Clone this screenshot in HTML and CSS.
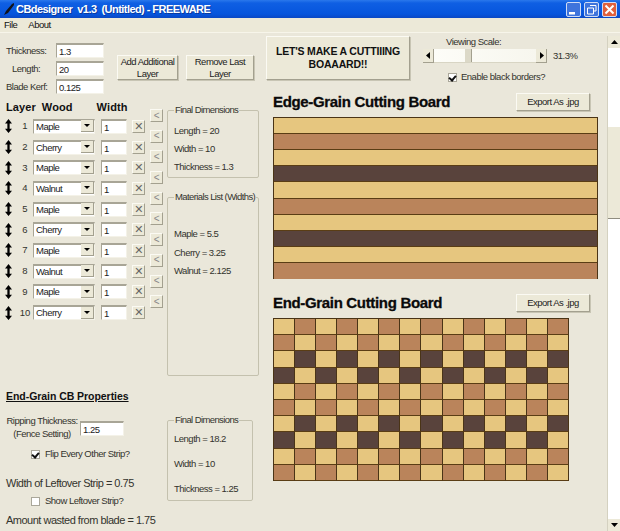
FILE: index.html
```html
<!DOCTYPE html>
<html lang="en">
<head>
<meta charset="utf-8">
<title>CBdesigner</title>
<link rel="stylesheet" href="styles.css">
</head>
<body>
<div class="window">
  <header class="titlebar">
    <svg class="app-icon" width="12" height="14" viewBox="0 0 12 14"><path d="M1 13 L3 9 L9 2 L11 1 L11 3 L5 11 Z" fill="#10131c"/></svg>
    <span class="title">CBdesigner  v1.3  (Untitled) - FREEWARE</span>
    <div class="controls">
      <span class="ctl"><svg width="15" height="15" viewBox="0 0 15 15"><rect x="3" y="10" width="6" height="2.5" fill="#fff"/></svg></span>
      <span class="ctl"><svg width="15" height="15" viewBox="0 0 15 15"><path d="M6 3.5h6v5.5h-2M3.5 6h6v6h-6z" fill="none" stroke="#fff"/></svg></span>
      <span class="ctl close"><svg width="15" height="15" viewBox="0 0 15 15"><path d="M3.5 3.5l8 8M11.5 3.5l-8 8" stroke="#fff" stroke-width="2"/></svg></span>
    </div>
  </header>
  <nav class="menubar"><span>File</span><span>About</span></nav>
  <div class="body">
    <main class="pane">
      <section class="left">
        <div class="params">
          <div class="fields">
            <label class="field"><span class="lbl l-thick">Thickness:</span><span class="input w48">1.3</span></label>
            <label class="field"><span class="lbl l-len">Length:</span><span class="input w48">20</span></label>
            <label class="field"><span class="lbl l-kerf">Blade Kerf:</span><span class="input w48">0.125</span></label>
          </div>
          <button class="btn add">Add Additional<br>Layer</button>
          <button class="btn remove">Remove Last<br>Layer</button>
        </div>
        <div class="layers">
          <div class="table">
            <div class="heads"><b class="h-layer">Layer</b><b class="h-wood">Wood</b><b class="h-width">Width</b></div>
            <div class="row"><svg class="mv" viewBox="0 0 8 16"><use href="#updown"/></svg><span class="num">1</span><span class="select"><span>Maple</span><i class="drop"></i></span><span class="input w26">1</span><button class="x">✕</button></div>
            <div class="row"><svg class="mv" viewBox="0 0 8 16"><use href="#updown"/></svg><span class="num">2</span><span class="select"><span>Cherry</span><i class="drop"></i></span><span class="input w26">1</span><button class="x">✕</button></div>
            <div class="row"><svg class="mv" viewBox="0 0 8 16"><use href="#updown"/></svg><span class="num">3</span><span class="select"><span>Maple</span><i class="drop"></i></span><span class="input w26">1</span><button class="x">✕</button></div>
            <div class="row"><svg class="mv" viewBox="0 0 8 16"><use href="#updown"/></svg><span class="num">4</span><span class="select"><span>Walnut</span><i class="drop"></i></span><span class="input w26">1</span><button class="x">✕</button></div>
            <div class="row"><svg class="mv" viewBox="0 0 8 16"><use href="#updown"/></svg><span class="num">5</span><span class="select"><span>Maple</span><i class="drop"></i></span><span class="input w26">1</span><button class="x">✕</button></div>
            <div class="row"><svg class="mv" viewBox="0 0 8 16"><use href="#updown"/></svg><span class="num">6</span><span class="select"><span>Cherry</span><i class="drop"></i></span><span class="input w26">1</span><button class="x">✕</button></div>
            <div class="row"><svg class="mv" viewBox="0 0 8 16"><use href="#updown"/></svg><span class="num">7</span><span class="select"><span>Maple</span><i class="drop"></i></span><span class="input w26">1</span><button class="x">✕</button></div>
            <div class="row"><svg class="mv" viewBox="0 0 8 16"><use href="#updown"/></svg><span class="num">8</span><span class="select"><span>Walnut</span><i class="drop"></i></span><span class="input w26">1</span><button class="x">✕</button></div>
            <div class="row"><svg class="mv" viewBox="0 0 8 16"><use href="#updown"/></svg><span class="num">9</span><span class="select"><span>Maple</span><i class="drop"></i></span><span class="input w26">1</span><button class="x">✕</button></div>
            <div class="row"><svg class="mv" viewBox="0 0 8 16"><use href="#updown"/></svg><span class="num">10</span><span class="select"><span>Cherry</span><i class="drop"></i></span><span class="input w26">1</span><button class="x">✕</button></div>
          </div>
          <div class="shifts">
            <button class="lt">&lt;</button><button class="lt">&lt;</button><button class="lt">&lt;</button><button class="lt">&lt;</button><button class="lt">&lt;</button><button class="lt">&lt;</button><button class="lt">&lt;</button><button class="lt">&lt;</button><button class="lt">&lt;</button><button class="lt">&lt;</button>
          </div>
          <div class="groups">
            <fieldset class="group final">
              <legend>Final Dimensions</legend>
              <p>Length = 20</p><p>Width = 10</p><p>Thickness = 1.3</p>
            </fieldset>
            <fieldset class="group materials">
              <legend>Materials List (Widths)</legend>
              <p>Maple = 5.5</p><p>Cherry = 3.25</p><p>Walnut = 2.125</p>
            </fieldset>
          </div>
        </div>
        <div class="endgrain">
          <div class="eg-main">
            <h3>End-Grain CB Properties</h3>
            <div class="rip">
              <div class="rip-label">Ripping Thickness:<br>(Fence Setting)</div>
              <span class="input w44">1.25</span>
            </div>
            <div class="check flip"><span class="box on"></span>Flip Every Other Strip?</div>
            <div class="big leftover">Width of Leftover Strip = 0.75</div>
            <div class="check show"><span class="box"></span>Show Leftover Strip?</div>
            <div class="big wasted">Amount wasted from blade = 1.75</div>
          </div>
          <fieldset class="group eg-final">
            <legend>Final Dimensions</legend>
            <p>Length = 18.2</p><p>Width = 10</p><p>Thickness = 1.25</p>
          </fieldset>
        </div>
      </section>
      <section class="right">
        <div class="top">
          <button class="btn make">LET'S MAKE A CUTTIIING<br>BOAAARD!!</button>
          <div class="scale">
            <div class="scale-label">Viewing Scale:</div>
            <div class="slider-row">
              <div class="slider">
                <i class="sl-btn"><svg width="5" height="7" viewBox="0 0 5 7"><path d="M4 0v7L0 3.5z"/></svg></i>
                <i class="sl-track"><i class="sl-thumb"></i></i>
                <i class="sl-btn"><svg width="5" height="7" viewBox="0 0 5 7"><path d="M1 0v7l4-3.5z"/></svg></i>
              </div>
              <span class="pct">31.3%</span>
            </div>
            <div class="check borders"><span class="box on"></span>Enable black borders?</div>
          </div>
        </div>
        <div class="board-head edge-head"><h2>Edge-Grain Cutting Board</h2><button class="btn export">Export As .jpg</button></div>
        <div class="edge">
          <i class="m"></i><i class="c"></i><i class="m"></i><i class="w"></i><i class="m"></i><i class="c"></i><i class="m"></i><i class="w"></i><i class="m"></i><i class="c"></i>
        </div>
        <div class="board-head end-head"><h2>End-Grain Cutting Board</h2><button class="btn export">Export As .jpg</button></div>
        <div class="end">
          <i class="m"></i><i class="c"></i><i class="m"></i><i class="c"></i><i class="m"></i><i class="c"></i><i class="m"></i><i class="c"></i><i class="m"></i><i class="c"></i><i class="m"></i><i class="c"></i><i class="m"></i><i class="c"></i>
          <i class="c"></i><i class="m"></i><i class="c"></i><i class="m"></i><i class="c"></i><i class="m"></i><i class="c"></i><i class="m"></i><i class="c"></i><i class="m"></i><i class="c"></i><i class="m"></i><i class="c"></i><i class="m"></i>
          <i class="m"></i><i class="w"></i><i class="m"></i><i class="w"></i><i class="m"></i><i class="w"></i><i class="m"></i><i class="w"></i><i class="m"></i><i class="w"></i><i class="m"></i><i class="w"></i><i class="m"></i><i class="w"></i>
          <i class="w"></i><i class="m"></i><i class="w"></i><i class="m"></i><i class="w"></i><i class="m"></i><i class="w"></i><i class="m"></i><i class="w"></i><i class="m"></i><i class="w"></i><i class="m"></i><i class="w"></i><i class="m"></i>
          <i class="m"></i><i class="c"></i><i class="m"></i><i class="c"></i><i class="m"></i><i class="c"></i><i class="m"></i><i class="c"></i><i class="m"></i><i class="c"></i><i class="m"></i><i class="c"></i><i class="m"></i><i class="c"></i>
          <i class="c"></i><i class="m"></i><i class="c"></i><i class="m"></i><i class="c"></i><i class="m"></i><i class="c"></i><i class="m"></i><i class="c"></i><i class="m"></i><i class="c"></i><i class="m"></i><i class="c"></i><i class="m"></i>
          <i class="m"></i><i class="w"></i><i class="m"></i><i class="w"></i><i class="m"></i><i class="w"></i><i class="m"></i><i class="w"></i><i class="m"></i><i class="w"></i><i class="m"></i><i class="w"></i><i class="m"></i><i class="w"></i>
          <i class="w"></i><i class="m"></i><i class="w"></i><i class="m"></i><i class="w"></i><i class="m"></i><i class="w"></i><i class="m"></i><i class="w"></i><i class="m"></i><i class="w"></i><i class="m"></i><i class="w"></i><i class="m"></i>
          <i class="m"></i><i class="c"></i><i class="m"></i><i class="c"></i><i class="m"></i><i class="c"></i><i class="m"></i><i class="c"></i><i class="m"></i><i class="c"></i><i class="m"></i><i class="c"></i><i class="m"></i><i class="c"></i>
          <i class="c"></i><i class="m"></i><i class="c"></i><i class="m"></i><i class="c"></i><i class="m"></i><i class="c"></i><i class="m"></i><i class="c"></i><i class="m"></i><i class="c"></i><i class="m"></i><i class="c"></i><i class="m"></i>
        </div>
      </section>
    </main>
    <aside class="scrollbar">
      <i class="sb-btn"><svg width="7" height="4" viewBox="0 0 7 4"><path d="M3.5 0L7 4H0z"/></svg></i>
      <i class="sb-track"><i class="sb-thumb"></i></i>
      <i class="sb-btn"><svg width="7" height="4" viewBox="0 0 7 4"><path d="M0 0h7L3.5 4z"/></svg></i>
    </aside>
  </div>
</div>
<svg class="defs" width="0" height="0"><defs><path id="updown" d="M4 0L8 5H5.3V11H8L4 16L0 11H2.7V5H0Z" fill="#000"/></defs></svg>
</body>
</html>
```
FILE: styles.css
```css
* { box-sizing: border-box; }
html, body { margin: 0; height: 100%; overflow: hidden; }
body { font: 9.5px/12px "Liberation Sans", Arial, sans-serif; letter-spacing: -.5px; color: #33332d; background: #eae7da; }
button { letter-spacing: -.5px; }
.defs { display: block; height: 0; }
.window { width: 620px; height: 531px; display: flex; flex-direction: column; }

.titlebar { height: 18px; display: flex; align-items: center; padding-left: 3px; color: #fff;
  background: linear-gradient(#2a78ec 0, #0f5fe3 3px, #0655dd 14px, #0a48c4 100%); }
.app-icon { flex: none; }
.title { margin-left: 1px; font: bold 11px/16px "Liberation Sans", sans-serif; white-space: pre; letter-spacing: -.55px; text-shadow: 1px 1px 0 #0a3aa0; }
.controls { margin-left: auto; display: flex; gap: 3px; padding-right: 3px; }
.ctl { width: 15px; height: 15px; display: block; border-radius: 2px; border: 1px solid #cfdcf5; background: #3e74dc; }
.ctl svg { display: block; margin: -1px; }
.close { background: #e0603c; }

.menubar { height: 15px; display: flex; gap: 11px; padding: 1px 0 0 4px; color: #111; background: #ece9d8; border-bottom: 1px solid #f7f5ea; }

.body { flex: 1; min-height: 0; display: flex; }
.pane { flex: 1; display: flex; min-width: 0; }
.left { width: 266px; flex: none; display: flex; flex-direction: column; padding-top: 10px; }
.right { flex: 1; padding: 3px 0 0 0; min-width: 0; }

.params { display: flex; align-items: flex-start; height: 54px; }
.fields { width: 117px; flex: none; display: flex; flex-direction: column; gap: 3px; }
.field { display: flex; align-items: center; height: 15px; }
.lbl { width: 56px; flex: none; padding-left: 6px; }
.l-len { padding-left: 12px; }
.input { display: block; height: 15px; padding: 1px 0 0 2px; background: #fff; color: #222;
  border-top: 2px solid #a8a596; border-left: 1px solid #a8a596; border-right: 1px solid #f4f2e8; border-bottom: 1px solid #f4f2e8; line-height: 11px; }
.w48 { width: 48px; }
.w26 { width: 26px; }
.w44 { width: 44px; height: 15px; }

.btn { margin: 0; padding: 0; font: 9.5px/12px "Liberation Sans", sans-serif; color: #222; background: #ece9d8;
  border: 1px solid; border-color: #fbfaf3 #a3a08f #a3a08f #fbfaf3; box-shadow: 1px 1px 0 #c8c5b4; }
.add { width: 61px; height: 25px; margin-top: 12px; }
.remove { width: 68px; height: 25px; margin: 12px 0 0 8px; }

.layers { display: flex; height: 279px; }
.table { width: 149px; flex: none; padding-top: 3px; }
.heads { height: 16px; display: flex; font: bold 11px/14px "Liberation Sans", sans-serif; color: #111; letter-spacing: .1px; }
.h-layer { margin-left: 6px; }
.h-wood { margin-left: 6px; }
.h-width { margin-left: 24px; }
.row { display: flex; align-items: center; height: 20.7px; }
.mv { width: 7px; height: 14px; margin-left: 5px; flex: none; }
.num { width: 21px; flex: none; text-align: center; padding-left: 5px; letter-spacing: 0; }
.select { width: 62px; height: 15px; flex: none; display: flex; align-items: center; justify-content: space-between; padding-left: 2px; background: #fff; color: #222;
  border-top: 2px solid #a8a596; border-left: 1px solid #a8a596; border-right: 1px solid #f4f2e8; border-bottom: 1px solid #f4f2e8; }
.drop { width: 13px; height: 12px; margin-top: -1px; background: #ece9d8; border-right: 1px solid #a3a08f; border-bottom: 1px solid #a3a08f; position: relative; }
.drop::after { content: ""; position: absolute; left: 3px; top: 4px; border: 3px solid transparent; border-top: 3px solid #000; border-bottom: 0; }
.row .input { margin-left: 6px; }
.x { width: 13px; height: 13px; margin: 0 0 0 5px; padding: 0; font: 11px/11px "DejaVu Sans", sans-serif; color: #666; background: #ece9d8; border: 1px solid; border-color: #fbfaf3 #a3a08f #a3a08f #fbfaf3; }

.shifts { width: 17px; flex: none; margin-left: 1px; padding-top: 12px; display: flex; flex-direction: column; gap: 7.7px; }
.lt { width: 13px; height: 13px; padding: 0; font: 10px/10px "Liberation Sans", sans-serif; color: #888; background: #ece9d8; border: 1px solid; border-color: #fbfaf3 #a3a08f #a3a08f #fbfaf3; }

.groups { width: 92px; flex: none; padding-top: 8px; display: flex; flex-direction: column; }
.group { margin: 0; padding: 0 0 0 6px; border: 1px solid #c4c1ae; border-radius: 2px; min-width: 0; }
.group legend { padding: 0 1px; font-size: 9.5px; line-height: 10px; letter-spacing: -.6px; white-space: nowrap; }
.group p { margin: 0; line-height: 12px; }
.final { height: 74px; }
.final p { margin-top: 6px; }
.final legend + p { margin-top: 10px; }
.materials { height: 185px; margin-top: 14px; }
.materials p { margin-top: 6.5px; }
.materials legend + p { margin-top: 26px; }

.endgrain { display: flex; flex: 1; min-height: 0; }
.eg-main { width: 167px; flex: none; padding-left: 6px; }
.eg-main h3 { margin: 14px 0 0; font: bold 10.5px/13px "Liberation Sans", sans-serif; letter-spacing: -.05px; text-decoration: underline; color: #111; }
.rip { display: flex; margin-top: 11px; }
.rip-label { width: 72px; flex: none; text-align: center; line-height: 13px; white-space: nowrap; }
.rip .input { margin: 7px 0 0 2px; }
.check { display: flex; align-items: center; line-height: 12px; }
.box { width: 9px; height: 9px; margin-right: 5px; flex: none; background: #fff; border: 1px solid #aaa79a; position: relative; }
.box.on::after { content: ""; position: absolute; left: 1px; top: 0; width: 3px; height: 5px; border: solid #111; border-width: 0 2px 2px 0; transform: rotate(40deg); }
.flip { margin: 8px 0 0 25px; }
.show { margin: 5px 0 0 25px; }
.big { font-size: 11px; line-height: 14px; }
.leftover { margin-top: 16px; }
.wasted { margin-top: 6px; }
.eg-final { width: 86px; height: 86px; margin-top: 39px; }
.eg-final p { margin-top: 13px; }
.eg-final legend + p { margin-top: 8px; }

.top { display: flex; height: 44px; }
.make { width: 144px; height: 44px; font: bold 10.5px/13px "Liberation Sans", sans-serif; letter-spacing: -.2px; color: #111; }
.scale { margin-left: 13px; width: 160px; }
.scale-label { margin: 0 0 0 23px; line-height: 12px; }
.slider-row { display: flex; align-items: center; gap: 6px; margin-top: 1px; }
.slider { display: flex; width: 124px; height: 14px; flex: none; }
.slider i { display: block; }
.slider .sl-btn { width: 11px; height: 14px; display: flex; align-items: center; justify-content: center; background: #ece9d8; border-right: 1px solid #a3a08f; border-bottom: 1px solid #a3a08f; }
.sl-btn svg { display: block; }
.sl-track { flex: 1; position: relative; background: linear-gradient(90deg, #fdfdf8, #f7f6ee); border-bottom: 1px solid #d8d5c4; }
.sl-thumb { position: absolute; left: 31px; top: 0; width: 7px; height: 13px; background: #dcd9c8; border-right: 1px solid #a3a08f; }
.borders { margin: 8px 0 0 25px; }
.borders .box { width: 9px; height: 9px; margin-right: 4px; }

.board-head { display: flex; align-items: center; padding-left: 7px; }
.board-head h2 { margin: 0; font: bold 15px/18px "Liberation Sans", sans-serif; color: #0a0a0a; letter-spacing: -.33px; -webkit-text-stroke: .3px #0a0a0a; flex: none; }
.edge-head { height: 18px; margin-top: 13px; width: 325px; }
.end-head { height: 18px; margin-top: 15px; width: 325px; }
.export { width: 74px; height: 18px; margin-left: auto; margin-right: 1px; }

.edge { width: 325px; height: 162px; margin: 6px 0 0 7px; display: grid; grid-template-rows: repeat(10, 1fr); border: solid #4a3416; border-width: 1px 1px 0 1px; }
.end { width: 296px; height: 163px; margin: 6px 0 0 7px; display: grid; grid-template-columns: repeat(14, 1fr); grid-template-rows: repeat(10, 1fr); border-top: 1px solid #4a3416; border-left: 1px solid #4a3416; }
.edge i, .end i { display: block; border-bottom: 1px solid #5a3d14; }
.end i { border-right: 1px solid #4a3416; }
.edge i:last-child { border-bottom: 0; }
.m { background: #e6c67f; }
.c { background: #ba845b; }
.w { background: #59433c; }

.scrollbar { width: 13px; flex: none; display: flex; flex-direction: column; margin-top: 3px; border-left: 1px solid #d4d1c0; }
.sb-btn { height: 12px; flex: none; display: flex; align-items: center; justify-content: center; background: #ece9d8; }
.sb-btn svg { display: block; }
.sb-track { flex: 1; display: block; position: relative; background: #fff; }
.sb-thumb { display: block; position: absolute; left: 0; right: 0; top: 79px; height: 92px; background: #ece9d8; border-bottom: 1px solid #8f8d80; }
```
